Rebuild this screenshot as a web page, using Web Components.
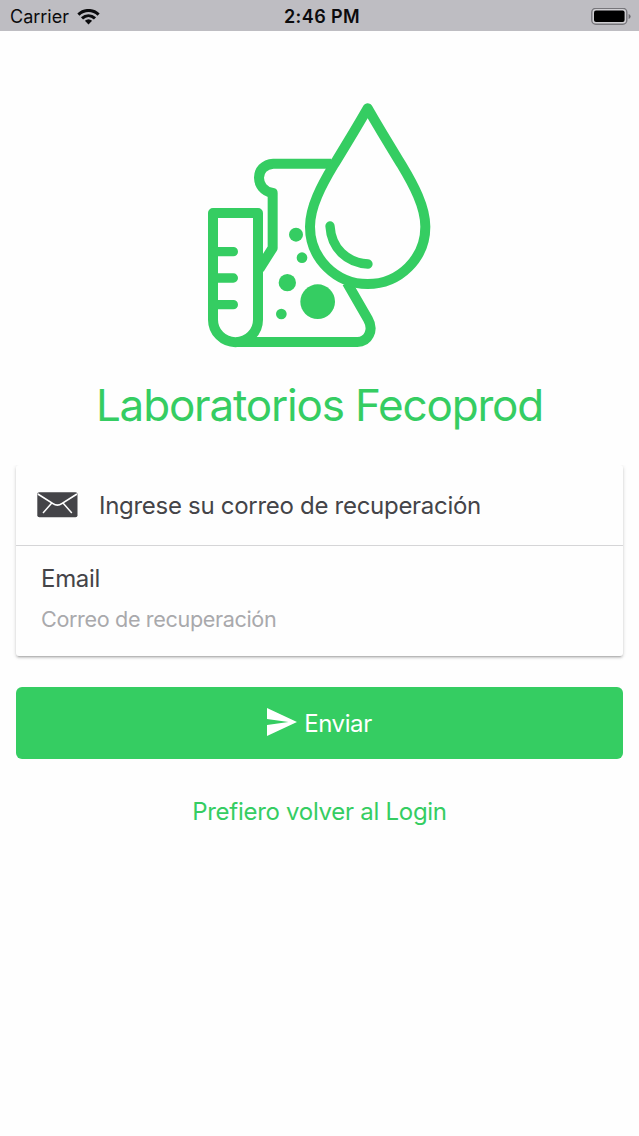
<!DOCTYPE html>
<html lang="es">
<head>
<meta charset="utf-8">
<meta name="viewport" content="width=device-width, initial-scale=1">
<title>Laboratorios Fecoprod</title>
<style>
  body {
    margin: 0;
    background-color: #fefefe;
    font-family: Inter, "Liberation Sans", sans-serif;
    color: #444448;
  }
</style>
</head>
<body>
<recovery-page></recovery-page>

<script>
const statusStyle = `
  :host {
    display: grid;
    grid-template-columns: 1fr auto 1fr;
    align-items: center;
    height: 31px;
    box-sizing: border-box;
    padding: 2px 8px 0 10px;
    background-color: #bebdc2;
    color: #0b0b0d;
    font-size: 18px;
    line-height: 28px;
  }
  .carrier {
    display: flex;
    align-items: center;
    gap: 8px;
  }
  .time {
    font-weight: 600;
    letter-spacing: 0.4px;
    padding-left: 3px;
  }
  .battery {
    justify-self: end;
  }
  svg {
    display: block;
  }
`

class StatusBar extends HTMLElement {
  constructor() {
    super()
    this._shadowDom = this.attachShadow({mode: 'open'})
  }
  connectedCallback() {
    this._shadowDom.innerHTML = `
      <style>${statusStyle}</style>
      <div class="carrier">
        <span><slot name="carrier"></slot></span>
        <svg width="23" height="16" viewBox="0 0 23 16">
          <g fill="none" stroke="#0b0b0d" stroke-width="3.1">
            <path d="M1.4 5.6 C7.2 0.1 15.8 0.1 21.6 5.6"/>
            <path d="M5 9.4 C8.9 5.8 14.1 5.8 18 9.4"/>
          </g>
          <path d="M7.9 11.7 Q11.5 8.6 15.1 11.7 L11.5 15.4 Z" fill="#0b0b0d"/>
        </svg>
      </div>
      <span class="time"><slot name="time"></slot></span>
      <svg class="battery" width="40" height="18" viewBox="0 0 40 18">
        <rect x="0.8" y="0.3" width="35" height="16" rx="4" fill="#d0cfd3" stroke="#77767b" stroke-width="1.4"/>
        <rect x="3" y="2.5" width="30.6" height="11.6" rx="2" fill="#000"/>
        <path d="M37.6 5.9 Q39.6 6.8 39.6 8.5 Q39.6 10.2 37.6 11.1 Z" fill="#66656a"/>
      </svg>
    `
  }
}
window.customElements.define('status-bar', StatusBar)


class LabLogo extends HTMLElement {
  constructor() {
    super()
    this._shadowDom = this.attachShadow({mode: 'open'})
  }
  connectedCallback() {
    this._shadowDom.innerHTML = `
      <style>
        :host { display: block; width: 260px; height: 270px; }
        svg { display: block; }
        .line { fill: none; stroke: #35cd62; stroke-width: 30; stroke-linejoin: round; }
        .round { stroke-linecap: round; stroke-width: 28; }
        .dot { fill: #35cd62; }
      </style>
      <svg width="260" height="270" viewBox="0 0 780 810">
        <!-- flask -->
        <path class="line" d="M424 221 H250 C193 224 193 300 248 309 V474 L208 537"/>
        <path class="line" d="M471 578 L534 688 C553 721 534 756 502 756 H140"/>
        <circle class="dot" cx="318" cy="434" r="21"/>
        <circle class="dot" cx="336" cy="503" r="16"/>
        <circle class="dot" cx="292" cy="578" r="26"/>
        <circle class="dot" cx="383" cy="635" r="52"/>
        <circle class="dot" cx="274" cy="672" r="16"/>
        <!-- test tube -->
        <path class="line" d="M69 369 H204 V689 A67.5 67.5 0 0 1 69 689 Z"/>
        <path class="line round" d="M72 485 H130 M72 564 H130 M72 644 H130"/>
        <!-- drop -->
        <path class="line" d="M533 55 C490 130 455 186 431 225 C395 285 360 350 360 410 A173 172 0 0 0 706 410 C706 350 671 285 635 225 C611 186 576 130 533 55 Z"/>
        <path class="line round" d="M420 408 C424 475 470 518 534 522"/>
      </svg>
    `
  }
}
window.customElements.define('lab-logo', LabLogo)


const cardStyle = `
  :host {
    display: block;
    height: 191px;
    border-radius: 3px;
    background-color: #fefefe;
    box-shadow: 0 2px 2px 0 rgba(0,0,0,.12), 0 3px 1px -2px rgba(0,0,0,.12), 0 1px 4px 0 rgba(0,0,0,.14);
    clip-path: inset(0 -10px -10px -10px);
  }
  .header {
    display: flex;
    align-items: center;
    gap: 21px;
    height: 81px;
    box-sizing: border-box;
    padding: 1px 21px 0;
    border-bottom: 1px solid #d5d5d7;
    font-size: 24px;
    letter-spacing: -0.29px;
  }
  .header svg {
    flex: none;
    position: relative;
    top: -1px;
  }
  .field {
    display: flex;
    flex-direction: column;
    padding: 15px 25px 0;
  }
  label {
    font-size: 24px;
    line-height: 36px;
    letter-spacing: -0.3px;
  }
  input {
    border: 0;
    padding: 0;
    margin-top: 4px;
    height: 36px;
    background: none;
    font: inherit;
    font-size: 21.6px;
    letter-spacing: -0.36px;
    outline: none;
  }
  input::placeholder {
    color: #a9a9ac;
    opacity: 1;
  }
`

class RecoveryCard extends HTMLElement {
  constructor() {
    super()
    this._shadowDom = this.attachShadow({mode: 'open'})
  }
  connectedCallback() {
    this._shadowDom.innerHTML = `
      <style>${cardStyle}</style>
      <div class="header">
        <svg width="41" height="26" viewBox="0 0 41 26">
          <rect x="0.3" y="0.3" width="40.2" height="25" rx="2" fill="#444448"/>
          <path d="M0.8 2 L16 11.6 Q20.4 14.8 24.8 11.6 L40 2" fill="none" stroke="#fff" stroke-width="1.7"/>
          <path d="M14.8 11 L6 21 M26 11 L34.8 21" fill="none" stroke="#fff" stroke-width="1.5"/>
        </svg>
        <span class="title"><slot></slot></span>
      </div>
      <div class="field">
        <label for="email">${this.getAttribute('label')}</label>
        <input id="email" type="email" placeholder="${this.getAttribute('placeholder')}">
      </div>
    `
  }
}
window.customElements.define('recovery-card', RecoveryCard)


class SendButton extends HTMLElement {
  constructor() {
    super()
    this._shadowDom = this.attachShadow({mode: 'open'})
  }
  connectedCallback() {
    this._shadowDom.innerHTML = `
      <style>
        :host { display: block; }
        button {
          display: flex;
          align-items: center;
          justify-content: center;
          gap: 7px;
          width: 100%;
          height: 72px;
          padding: 0;
          border: 0;
          border-radius: 6px;
          background-color: #35cd62;
          color: #fff;
          font: inherit;
          font-size: 24px;
          letter-spacing: -0.4px;
          cursor: pointer;
        }
        svg { margin-bottom: 2px; }
        span { padding-top: 1px; }
        button:hover { background-color: #31bf5b; }
      </style>
      <button type="button">
        <svg width="30" height="28" viewBox="0 0 30 28">
          <path d="M0 0 L30 14 L0 28 V17 L21.5 14 L0 11 Z" fill="#fff"/>
        </svg>
        <span><slot></slot></span>
      </button>
    `
  }
}
window.customElements.define('send-button', SendButton)


class RecoveryPage extends HTMLElement {
  constructor() {
    super()
    this._shadowDom = this.attachShadow({mode: 'open'})
  }
  connectedCallback() {
    this._shadowDom.innerHTML = `
      <style>
        :host { display: block; min-height: 1136px; }
        main {
          display: flex;
          flex-direction: column;
          padding: 59px 16px 0;
        }
        lab-logo { margin-left: 174px; }
        h1 {
          margin: 15px 0 0;
          text-align: center;
          font-size: 44px;
          font-weight: 400;
          line-height: 60px;
          letter-spacing: -1.18px;
          color: #35cd62;
        }
        recovery-card { margin-top: 30px; }
        send-button { margin-top: 31px; }
        a {
          align-self: center;
          margin-top: 35px;
          font-size: 24px;
          line-height: 36px;
          letter-spacing: -0.28px;
          color: #35cd62;
          text-decoration: none;
        }
      </style>
      <status-bar>
        <span slot="carrier">Carrier</span>
        <span slot="time">2:46 PM</span>
      </status-bar>
      <main>
        <lab-logo></lab-logo>
        <h1>Laboratorios Fecoprod</h1>
        <recovery-card label="Email" placeholder="Correo de recuperación">Ingrese su correo de recuperación</recovery-card>
        <send-button>Enviar</send-button>
        <a href="#login">Prefiero volver al Login</a>
      </main>
    `
  }
}
window.customElements.define('recovery-page', RecoveryPage)
</script>
</body>
</html>
